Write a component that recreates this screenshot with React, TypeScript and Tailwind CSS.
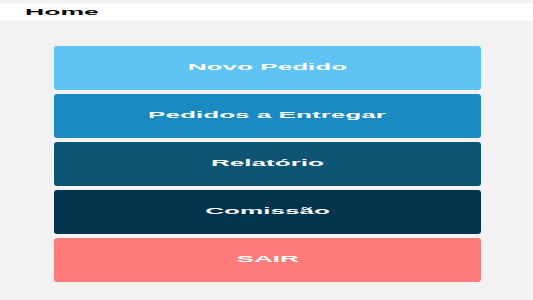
const items = [
  { label: "Novo Pedido", bg: "bg-[#5fc4f4]" },
  { label: "Pedidos a Entregar", bg: "bg-[#1b8ac3]" },
  { label: "Relatório", bg: "bg-[#0e5575]" },
  { label: "Comissão", bg: "bg-[#03344d]" },
  { label: "SAIR", bg: "bg-[#ff7b7b]" },
]

export default function App() {
  return (
    <div className="h-[300px] w-full bg-[#f2f2f2] pt-[3px] font-['Liberation_Sans',Arial,sans-serif]">
      {/* header */}
      <div className="flex h-[18px] items-center bg-white pl-[25px]">
        <span className="inline-block origin-left scale-x-[2.8] text-[9.5px] font-bold leading-none text-black">
          Home
        </span>
      </div>

      {/* menu */}
      <div className="mt-[25px] flex flex-col gap-[4.5px] pl-[54px] pr-[52px]">
        {items.map((item) => (
          <button
            key={item.label}
            type="button"
            className={`flex h-[43.5px] items-center justify-center rounded-[3px] ${item.bg}`}
          >
            <span className="inline-block scale-x-[2.9] text-[9px] font-bold leading-none text-white">
              {item.label}
            </span>
          </button>
        ))}
      </div>
    </div>
  )
}
